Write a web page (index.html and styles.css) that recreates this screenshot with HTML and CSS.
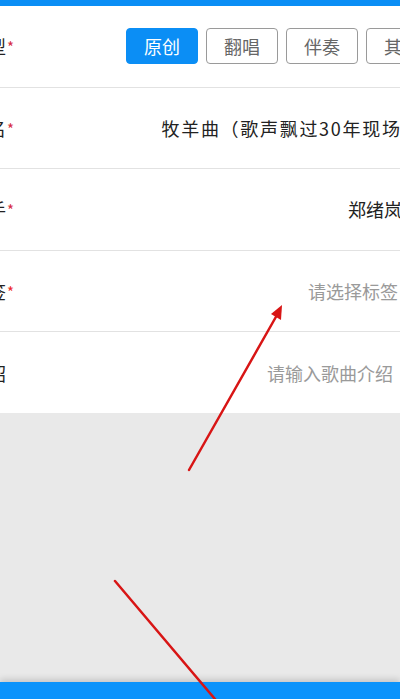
FILE: index.html
```html
<!DOCTYPE html>
<html lang="zh-CN">
<head>
    <meta charset="UTF-8">
    <meta name="viewport" content="width=device-width, initial-scale=1.0">
    <title>上传歌曲</title>
    <link rel="stylesheet" href="styles.css">
</head>
<body>
    <div class="page">
        <div class="top-bar"></div>

        <div class="form">
            <div class="row">
                <span class="label label-wide">类型<i class="req">*</i></span>
                <div class="types">
                    <button class="type active">原创</button>
                    <button class="type">翻唱</button>
                    <button class="type">伴奏</button>
                    <button class="type">其他</button>
                </div>
            </div>
            <div class="row">
                <span class="label">歌名<i class="req">*</i></span>
                <span class="value song-title">牧羊曲（歌声飘过30年现场版）</span>
            </div>
            <div class="row">
                <span class="label">歌手<i class="req">*</i></span>
                <span class="value">郑绪岚</span>
            </div>
            <div class="row">
                <span class="label">标签<i class="req req-bright">*</i></span>
                <span class="value placeholder tag-pick">请选择标签</span>
            </div>
            <div class="row">
                <span class="label">介绍</span>
                <span class="value placeholder intro">请输入歌曲介绍</span>
            </div>
        </div>

        <div class="filler"></div>
        <div class="bottom-bar"></div>

        <!-- annotation arrows drawn over the screenshot -->
        <svg class="marks" width="400" height="699" viewBox="0 0 400 699">
            <line x1="189" y1="470" x2="277" y2="315" stroke="#d81515" stroke-width="2.5" stroke-linecap="round"/>
            <polygon points="282,305 271,314 281,320" fill="#d81515"/>
            <line x1="115" y1="581" x2="220" y2="705" stroke="#d81515" stroke-width="2.5" stroke-linecap="round"/>
        </svg>
    </div>
</body>
</html>
```

FILE: styles.css
```css
body {
    margin: 0;
    overflow: hidden;
    font-family: "Noto Sans CJK SC", "Noto Sans", sans-serif;
    color: #222;
}
.page {
    position: relative;
    display: flex;
    flex-direction: column;
    width: 400px;
    height: 699px;
    background: #e9e9e9;
    overflow: hidden;
}
.top-bar {
    height: 6px;
    background: #0b8ef5;
}
.form {
    background: #fff;
    margin: 0 -2px 0 -30px;
}
.row {
    display: flex;
    align-items: center;
    height: 80.6px;
    border-bottom: 1px solid #e2e2e2;
    font-size: 18px;
    white-space: nowrap;
}
.row:last-child {
    border-bottom: none;
}
.label {
    flex-shrink: 0;
}
.label-wide {
    width: 156px;
}
.req {
    font-style: normal;
    color: #d62d45;
    font-size: 15px;
    margin-left: 1px;
    position: relative;
    top: -1px;
}
.req-bright {
    color: #ee2a2a;
}
.types {
    display: flex;
    gap: 8px;
    flex-shrink: 0;
}
.type {
    width: 72px;
    height: 36px;
    padding: 0;
    border: 1px solid #9a9a9a;
    border-radius: 4px;
    background: #fff;
    color: #666;
    font-family: inherit;
    font-size: 18px;
}
.type.active {
    background: #0b8ef5;
    border-color: #0b8ef5;
    color: #fff;
}
.value {
    margin-left: auto;
}
.song-title {
    letter-spacing: 1.7px;
    margin-right: -39px;
}
.placeholder {
    color: #9a9a9a;
}
.tag-pick {
    margin-right: 4px;
}
.intro {
    margin-right: 9px;
}
.filler {
    flex: 1;
}
.bottom-bar {
    height: 17px;
    background: #0b93fb;
    box-shadow: 0 -3px 6px rgba(0, 0, 0, 0.15);
}
.marks {
    position: absolute;
    top: 0;
    left: 0;
    pointer-events: none;
}
```
